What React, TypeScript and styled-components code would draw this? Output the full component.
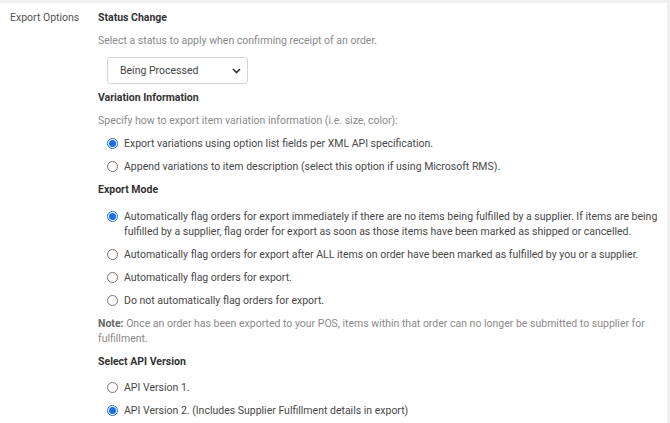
import styled, { createGlobalStyle } from 'styled-components'

const GlobalStyle = createGlobalStyle`
    body {
        margin: 0;
        background: #f1f1f1;
        font-family: Roboto, "Liberation Sans", sans-serif;
        font-size: 10.5px;
    }
`

const Card = styled.div`
    background: #fff;
    margin: 3px 3px 0 0;
    min-height: 420px;
    display: flex;
    padding: 7px 5px 0 10px;
`

const Label = styled.div`
    width: 88px;
    flex-shrink: 0;
    color: #555;
    line-height: 15px;
`

const Content = styled.div`
    flex: 1;
    display: flex;
    flex-direction: column;
    line-height: 15px;
`

const Heading = styled.div<{ $after?: number }>`
    font-weight: 700;
    color: #333;
    margin-bottom: ${p => p.$after ?? 8}px;
`

const Desc = styled.div`
    color: #8a8a8a;
    margin-bottom: 8px;

    strong {
        color: #666;
        font-weight: 700;
    }
`

const SelectBox = styled.div`
    margin: 1px 0 6px 9px;
    width: 141px;
    height: 27px;
    box-sizing: border-box;
    border: 1px solid #d4d4d4;
    border-radius: 3px;
    display: flex;
    align-items: center;
    justify-content: space-between;
    padding: 0 6px 0 12px;
    color: #444;
`

const Options = styled.div`
    display: flex;
    flex-direction: column;
    gap: 8px;
    margin-bottom: 8px;
`

const Option = styled.label`
    display: flex;
    align-items: flex-start;
    gap: 6px;
    padding-left: 9px;
    color: #484848;
`

const Radio = styled.span<{ $checked?: boolean }>`
    flex-shrink: 0;
    width: 11px;
    height: 11px;
    margin-top: 2px;
    box-sizing: border-box;
    border-radius: 50%;
    border: 1px solid ${p => (p.$checked ? '#1b6fe0' : '#777')};
    display: flex;
    align-items: center;
    justify-content: center;

    &::after {
        content: '';
        width: 7px;
        height: 7px;
        border-radius: 50%;
        background: ${p => (p.$checked ? '#1b6fe0' : 'transparent')};
    }
`

const Chevron = () => (
    <svg width="9" height="6" viewBox="0 0 9 6">
        <path d="M1 1 L4.5 4.5 L8 1" fill="none" stroke="#333" strokeWidth="1.6" />
    </svg>
)

interface RadioOption {
    text: string
    checked?: boolean
}

const RadioGroup = ({ items }: { items: RadioOption[] }) => (
    <Options>
        {items.map((item, index) => (
            <Option key={index}>
                <Radio $checked={item.checked} />
                <span>{item.text}</span>
            </Option>
        ))}
    </Options>
)

const App = () => {
    return (
        <>
            <GlobalStyle />
            <Card>
                <Label>Export Options</Label>
                <Content>
                    <Heading>Status Change</Heading>
                    <Desc>Select a status to apply when confirming receipt of an order.</Desc>
                    <SelectBox>
                        <span>Being Processed</span>
                        <Chevron />
                    </SelectBox>

                    <Heading>Variation Information</Heading>
                    <Desc>Specify how to export item variation information (i.e. size, color):</Desc>
                    <RadioGroup
                        items={[
                            { text: 'Export variations using option list fields per XML API specification.', checked: true },
                            { text: 'Append variations to item description (select this option if using Microsoft RMS).' },
                        ]}
                    />

                    <Heading $after={12}>Export Mode</Heading>
                    <RadioGroup
                        items={[
                            {
                                text: 'Automatically flag orders for export immediately if there are no items being fulfilled by a supplier. If items are being fulfilled by a supplier, flag order for export as soon as those items have been marked as shipped or cancelled.',
                                checked: true,
                            },
                            { text: 'Automatically flag orders for export after ALL items on order have been marked as fulfilled by you or a supplier.' },
                            { text: 'Automatically flag orders for export.' },
                            { text: 'Do not automatically flag orders for export.' },
                        ]}
                    />
                    <Desc>
                        <strong>Note:</strong> Once an order has been exported to your POS, items within that order can no longer be submitted to supplier for fulfillment.
                    </Desc>

                    <Heading $after={11}>Select API Version</Heading>
                    <RadioGroup
                        items={[
                            { text: 'API Version 1.' },
                            { text: 'API Version 2. (Includes Supplier Fulfillment details in export)', checked: true },
                        ]}
                    />
                </Content>
            </Card>
        </>
    )
}

export default App
